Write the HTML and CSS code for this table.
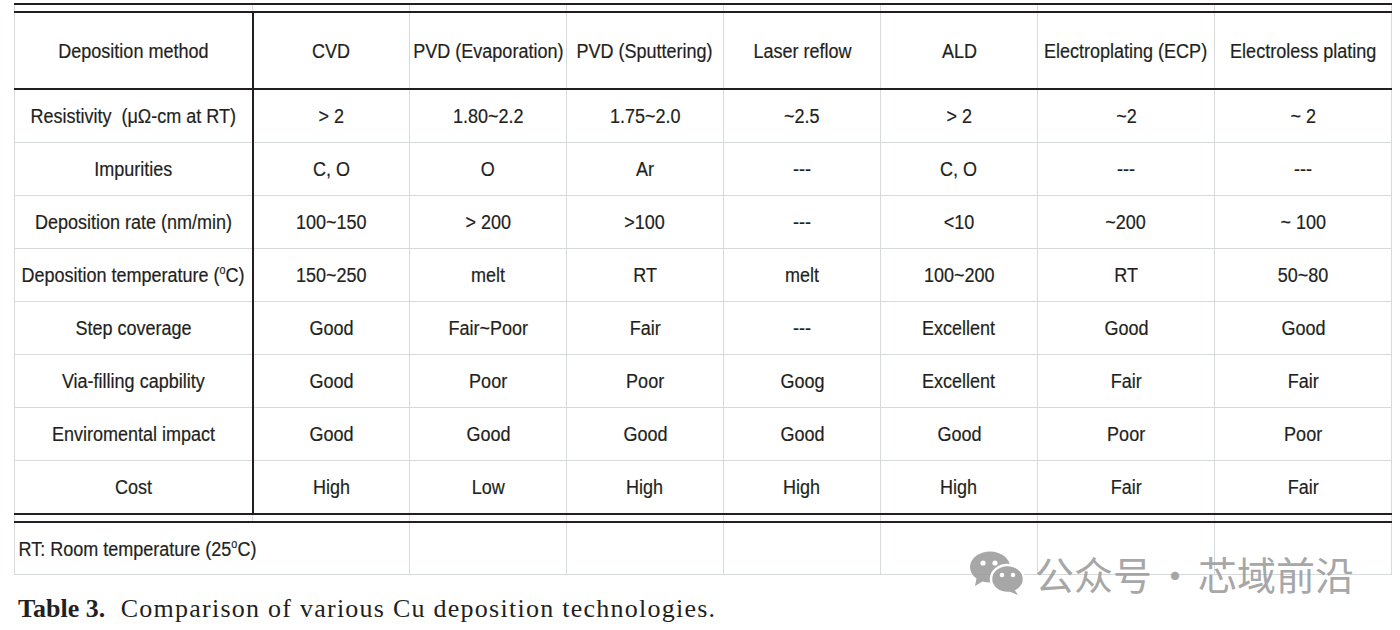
FILE: index.html
```html
<!DOCTYPE html>
<html lang="en">
<head>
<meta charset="utf-8">
<title>Comparison of various Cu deposition technologies</title>
<link rel="stylesheet" href="styles.css">
</head>
<body>
<div class="page">
  <table class="dep-table">
    <colgroup>
      <col class="c-label">
      <col class="c-std"><col class="c-std"><col class="c-std"><col class="c-std"><col class="c-std">
      <col class="c-wide"><col class="c-wide">
    </colgroup>
    <tbody>
      <tr class="spacer"><td></td><td></td><td></td><td></td><td></td><td></td><td></td><td></td></tr>
      <tr class="head">
        <td class="lbl"><span class="t">Deposition method</span></td>
        <td><span class="t">CVD</span></td>
        <td><span class="t">PVD (Evaporation)</span></td>
        <td><span class="t">PVD (Sputtering)</span></td>
        <td><span class="t">Laser reflow</span></td>
        <td><span class="t">ALD</span></td>
        <td><span class="t">Electroplating (ECP)</span></td>
        <td><span class="t">Electroless plating</span></td>
      </tr>
      <tr class="row">
        <td class="lbl"><span class="t">Resistivity&nbsp; (μΩ-cm at RT)</span></td>
        <td><span class="t">&gt; 2</span></td>
        <td><span class="t">1.80~2.2</span></td>
        <td><span class="t">1.75~2.0</span></td>
        <td><span class="t">~2.5</span></td>
        <td><span class="t">&gt; 2</span></td>
        <td><span class="t">~2</span></td>
        <td><span class="t">~ 2</span></td>
      </tr>
      <tr class="row">
        <td class="lbl"><span class="t">Impurities</span></td>
        <td><span class="t">C, O</span></td>
        <td><span class="t">O</span></td>
        <td><span class="t">Ar</span></td>
        <td><span class="t">---</span></td>
        <td><span class="t">C, O</span></td>
        <td><span class="t">---</span></td>
        <td><span class="t">---</span></td>
      </tr>
      <tr class="row">
        <td class="lbl"><span class="t">Deposition rate (nm/min)</span></td>
        <td><span class="t">100~150</span></td>
        <td><span class="t">&gt; 200</span></td>
        <td><span class="t">&gt;100</span></td>
        <td><span class="t">---</span></td>
        <td><span class="t">&lt;10</span></td>
        <td><span class="t">~200</span></td>
        <td><span class="t">~ 100</span></td>
      </tr>
      <tr class="row">
        <td class="lbl"><span class="t">Deposition temperature (<sup>o</sup>C)</span></td>
        <td><span class="t">150~250</span></td>
        <td><span class="t">melt</span></td>
        <td><span class="t">RT</span></td>
        <td><span class="t">melt</span></td>
        <td><span class="t">100~200</span></td>
        <td><span class="t">RT</span></td>
        <td><span class="t">50~80</span></td>
      </tr>
      <tr class="row">
        <td class="lbl"><span class="t">Step coverage</span></td>
        <td><span class="t">Good</span></td>
        <td><span class="t">Fair~Poor</span></td>
        <td><span class="t">Fair</span></td>
        <td><span class="t">---</span></td>
        <td><span class="t">Excellent</span></td>
        <td><span class="t">Good</span></td>
        <td><span class="t">Good</span></td>
      </tr>
      <tr class="row">
        <td class="lbl"><span class="t">Via-filling capbility</span></td>
        <td><span class="t">Good</span></td>
        <td><span class="t">Poor</span></td>
        <td><span class="t">Poor</span></td>
        <td><span class="t">Goog</span></td>
        <td><span class="t">Excellent</span></td>
        <td><span class="t">Fair</span></td>
        <td><span class="t">Fair</span></td>
      </tr>
      <tr class="row">
        <td class="lbl"><span class="t">Enviromental impact</span></td>
        <td><span class="t">Good</span></td>
        <td><span class="t">Good</span></td>
        <td><span class="t">Good</span></td>
        <td><span class="t">Good</span></td>
        <td><span class="t">Good</span></td>
        <td><span class="t">Poor</span></td>
        <td><span class="t">Poor</span></td>
      </tr>
      <tr class="row last">
        <td class="lbl"><span class="t">Cost</span></td>
        <td><span class="t">High</span></td>
        <td><span class="t">Low</span></td>
        <td><span class="t">High</span></td>
        <td><span class="t">High</span></td>
        <td><span class="t">High</span></td>
        <td><span class="t">Fair</span></td>
        <td><span class="t">Fair</span></td>
      </tr>
      <tr class="spacer"><td></td><td></td><td></td><td></td><td></td><td></td><td></td><td></td></tr>
      <tr class="foot">
        <td class="note" colspan="2"><span class="t">RT: Room temperature (25<sup>o</sup>C)</span></td>
        <td></td><td></td><td></td><td></td><td></td><td></td>
      </tr>
    </tbody>
  </table>

  <p class="caption"><b>Table 3.</b>&nbsp; Comparison of various Cu deposition technologies.</p>

  <div class="watermark">
    <svg class="wm-icon" viewBox="0 0 54 44" width="54" height="44" aria-hidden="true">
      <ellipse cx="20" cy="16" rx="20" ry="15.5" fill="currentColor"/>
      <path d="M7 25 L5 35 L15 29 Z" fill="currentColor"/>
      <circle cx="13" cy="12" r="2.6" fill="#fff"/>
      <circle cx="25" cy="12" r="2.6" fill="#fff"/>
      <ellipse cx="37.5" cy="28" rx="16.5" ry="14" fill="currentColor" stroke="#fff" stroke-width="2.5"/>
      <path d="M44 38 L48 44 L38 40 Z" fill="currentColor"/>
      <circle cx="32" cy="24" r="2.3" fill="#fff"/>
      <circle cx="43" cy="24" r="2.3" fill="#fff"/>
    </svg>
    <span class="wm-text">公众号</span><span class="wm-dot">·</span><span class="wm-text">芯域前沿</span>
  </div>
</div>
</body>
</html>
```

FILE: styles.css
```css
html, body {
  margin: 0;
  padding: 0;
  background: #ffffff;
}

.page {
  position: relative;
  width: 1400px;
  height: 630px;
  padding-top: 3px;
  box-sizing: border-box;
}

.dep-table {
  margin-left: 14px;
  width: 1377px;
  table-layout: fixed;
  border-collapse: collapse;
  border-top: 2px solid #231f20;
  font-family: "Liberation Sans", Arial, sans-serif;
  font-size: 20px;
  color: #231f20;
}

.c-label { width: 238px; }
.c-std { width: 157px; }
.c-wide { width: 177px; }

.dep-table td {
  border: 1px solid #d6dada;
  padding: 0;
  text-align: center;
  vertical-align: middle;
  white-space: nowrap;
  line-height: 22px;
}

.t {
  display: inline-block;
  margin: 0 -10px;
  transform: scaleX(0.9);
  -webkit-text-stroke: 0.2px #231f20;
}

.spacer td {
  height: 6px;
  border-top: none;
  border-bottom: none;
}

.head td {
  height: 75px;
  border-top: 2px solid #231f20;
  border-bottom: 2px solid #231f20;
}

.row td {
  height: 52px;
}

.row.last td {
  border-bottom: 2px solid #231f20;
}

.head td.lbl,
.row td.lbl {
  border-right: 2px solid #231f20;
}

.foot td {
  height: 51px;
  border-top: 2px solid #231f20;
}

.foot td.note {
  text-align: left;
}

.foot td.note .t {
  margin: 0;
  transform-origin: left center;
  padding-left: 4px;
}

sup {
  font-size: 12px;
  line-height: 0;
  vertical-align: 8px;
}

.caption {
  margin: 20px 0 0 18px;
  font-family: "Liberation Serif", "Times New Roman", serif;
  font-size: 26px;
  line-height: 28px;
  letter-spacing: 1.25px;
  color: #231f20;
}

.caption b {
  font-weight: bold;
  letter-spacing: 0;
}

.watermark {
  position: absolute;
  left: 970px;
  top: 551px;
  display: flex;
  align-items: center;
  color: #9b9b9b;
  opacity: 0.88;
}

.wm-icon {
  display: block;
  margin-right: 11px;
  color: #9b9b9b;
}

.wm-text {
  font-family: "Noto Sans CJK SC", "Noto Sans", sans-serif;
  font-size: 39px;
  line-height: 44px;
  white-space: nowrap;
}

.wm-dot {
  width: 46px;
  text-align: center;
  font-family: "Noto Sans CJK SC", "Noto Sans", sans-serif;
  font-size: 39px;
  line-height: 44px;
}
```
